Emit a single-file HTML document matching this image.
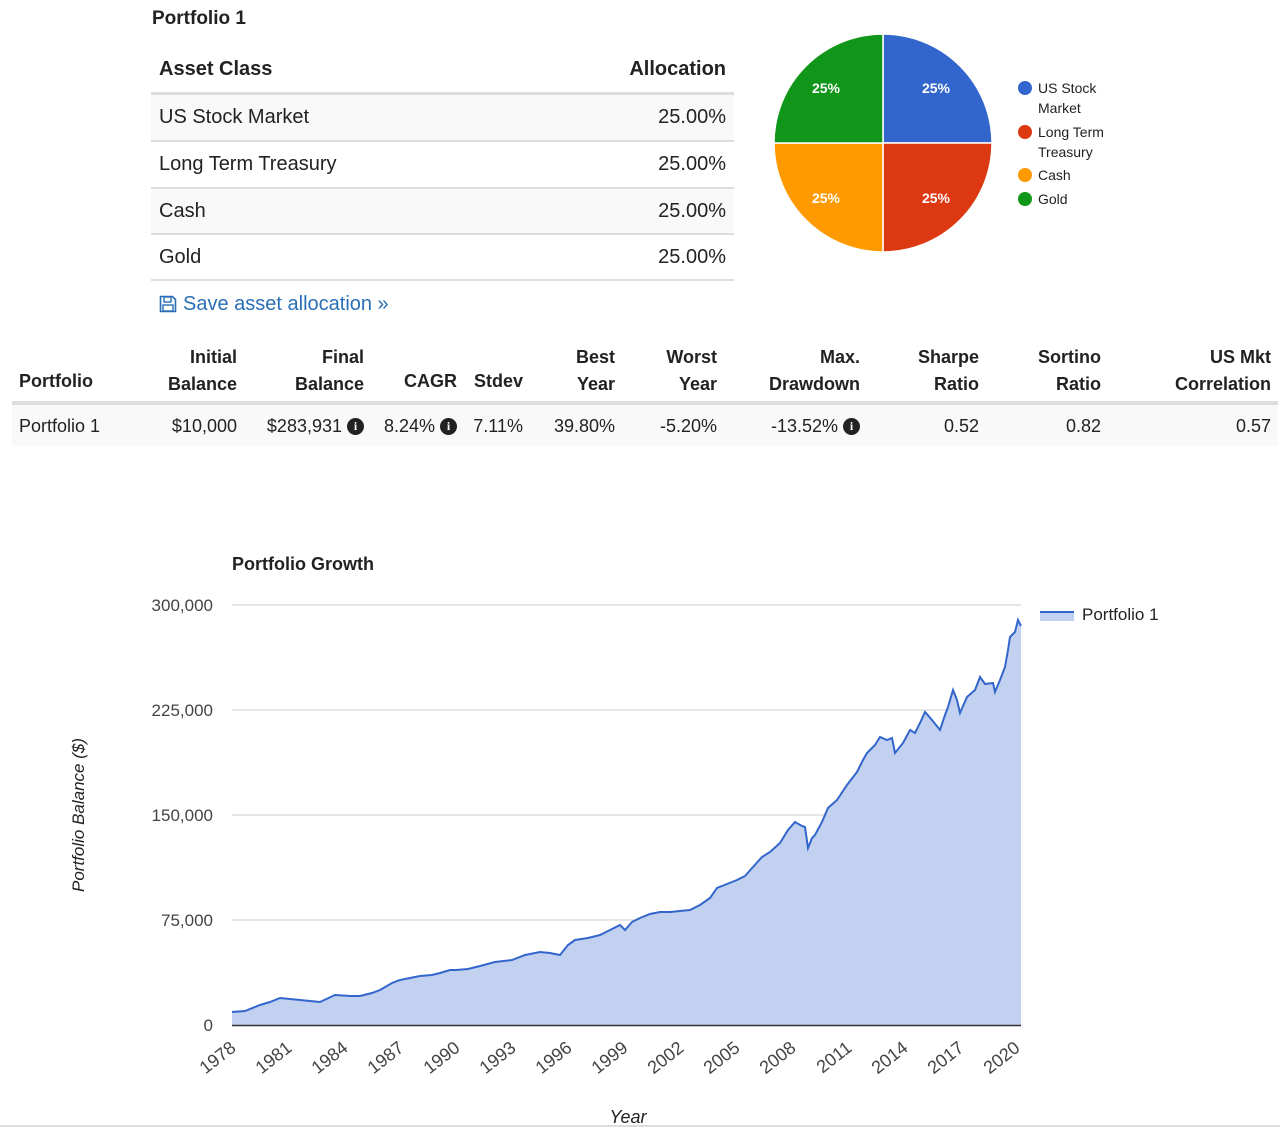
<!DOCTYPE html>
<html><head><meta charset="utf-8"><style>
body{margin:0;width:1280px;height:1133px;background:#fff;font-family:"Liberation Sans",Arial,sans-serif;color:#222;position:relative;overflow:hidden}
.a{position:absolute;white-space:nowrap}
.b{font-weight:bold}
.r{text-align:right}
.i{display:inline-block;width:17px;height:17px;border-radius:50%;background:#222;color:#fff;font-size:12px;font-weight:bold;text-align:center;line-height:17px;vertical-align:2px;font-family:"Liberation Serif",serif}
</style></head><body>
<div class="a b" style="left:152px;top:8px;font-size:19px">Portfolio 1</div>
<div class="a b" style="left:159px;top:58px;font-size:20px">Asset Class</div>
<div class="a b" style="left:560px;width:166px;top:58px;font-size:20px;text-align:right">Allocation</div>
<div class="a" style="left:151px;top:92px;width:583px;height:3px;background:#ddd"></div>
<div class="a" style="left:151px;top:95px;width:583px;height:45px;background:#f9f9f9;border-bottom:2px solid #ddd"></div>
<div class="a" style="left:151px;top:142px;width:583px;height:45px;border-bottom:2px solid #ddd"></div>
<div class="a" style="left:151px;top:189px;width:583px;height:44px;background:#f9f9f9;border-bottom:2px solid #ddd"></div>
<div class="a" style="left:151px;top:235px;width:583px;height:44px;border-bottom:2px solid #ddd"></div>
<div class="a" style="left:159px;top:106px;font-size:20px">US Stock Market</div>
<div class="a" style="left:159px;top:153px;font-size:20px">Long Term Treasury</div>
<div class="a" style="left:159px;top:200px;font-size:20px">Cash</div>
<div class="a" style="left:159px;top:246px;font-size:20px">Gold</div>
<div class="a r" style="left:600px;width:126px;top:106px;font-size:20px">25.00%</div>
<div class="a r" style="left:600px;width:126px;top:153px;font-size:20px">25.00%</div>
<div class="a r" style="left:600px;width:126px;top:200px;font-size:20px">25.00%</div>
<div class="a r" style="left:600px;width:126px;top:246px;font-size:20px">25.00%</div>
<svg class="a" style="left:159px;top:295px" width="18" height="18" viewBox="0 0 18 18"><path d="M1.5 1.5h12l3 3v12h-15z" fill="none" stroke="#2a6fb6" stroke-width="1.6"/><rect x="5" y="2" width="7" height="5" fill="none" stroke="#2a6fb6" stroke-width="1.4"/><rect x="4" y="10" width="10" height="6" fill="none" stroke="#2a6fb6" stroke-width="1.4"/></svg>
<div class="a" style="left:183px;top:293px;font-size:20px;color:#2a6fb6">Save asset allocation »</div>

<svg class="a" style="left:770px;top:30px" width="360" height="230">
<path d="M113 113V4A109 109 0 0 1 222 113Z" fill="#3366cc" stroke="#fff" stroke-width="1.5"/>
<path d="M113 113H222A109 109 0 0 1 113 222Z" fill="#dc3912" stroke="#fff" stroke-width="1.5"/>
<path d="M113 113V222A109 109 0 0 1 4 113Z" fill="#ff9900" stroke="#fff" stroke-width="1.5"/>
<path d="M113 113H4A109 109 0 0 1 113 4Z" fill="#109618" stroke="#fff" stroke-width="1.5"/>
<g fill="#fff" font-size="14" font-weight="bold" text-anchor="middle"><text x="56" y="63">25%</text><text x="166" y="63">25%</text><text x="56" y="173">25%</text><text x="166" y="173">25%</text></g>
<g font-size="14" fill="#222"><circle cx="255" cy="58" r="7" fill="#3366cc"/><text x="268" y="63">US Stock</text><text x="268" y="83">Market</text>
<circle cx="255" cy="102" r="7" fill="#dc3912"/><text x="268" y="107">Long Term</text><text x="268" y="127">Treasury</text>
<circle cx="255" cy="145" r="7" fill="#ff9900"/><text x="268" y="150">Cash</text>
<circle cx="255" cy="169" r="7" fill="#109618"/><text x="268" y="174">Gold</text></g>
</svg>

<div style="font-size:18px">
<div class="a b" style="left:19px;top:371px">Portfolio</div>
<div class="a b r" style="right:1043px;top:344px;line-height:27px">Initial<br>Balance</div>
<div class="a b r" style="right:916px;top:344px;line-height:27px">Final<br>Balance</div>
<div class="a b r" style="right:823px;top:371px">CAGR</div>
<div class="a b r" style="right:757px;top:371px">Stdev</div>
<div class="a b r" style="right:665px;top:344px;line-height:27px">Best<br>Year</div>
<div class="a b r" style="right:563px;top:344px;line-height:27px">Worst<br>Year</div>
<div class="a b r" style="right:420px;top:344px;line-height:27px">Max.<br>Drawdown</div>
<div class="a b r" style="right:301px;top:344px;line-height:27px">Sharpe<br>Ratio</div>
<div class="a b r" style="right:179px;top:344px;line-height:27px">Sortino<br>Ratio</div>
<div class="a b r" style="right:9px;top:344px;line-height:27px">US Mkt<br>Correlation</div>
<div class="a" style="left:12px;top:401px;width:1266px;height:4px;background:#ddd"></div>
<div class="a" style="left:12px;top:405px;width:1266px;height:41px;background:#f9f9f9"></div>
<div class="a" style="left:19px;top:416px">Portfolio 1</div>
<div class="a r" style="right:1043px;top:416px">$10,000</div>
<div class="a r" style="right:916px;top:416px">$283,931 <span class="i">i</span></div>
<div class="a r" style="right:823px;top:416px">8.24% <span class="i">i</span></div>
<div class="a r" style="right:757px;top:416px">7.11%</div>
<div class="a r" style="right:665px;top:416px">39.80%</div>
<div class="a r" style="right:563px;top:416px">-5.20%</div>
<div class="a r" style="right:420px;top:416px">-13.52% <span class="i">i</span></div>
<div class="a r" style="right:301px;top:416px">0.52</div>
<div class="a r" style="right:179px;top:416px">0.82</div>
<div class="a r" style="right:9px;top:416px">0.57</div>
</div>

<svg class="a" style="left:0;top:0" width="1280" height="1133">
<text x="232" y="570" font-size="18" font-weight="bold" fill="#222">Portfolio Growth</text>
<g stroke="#ccc" stroke-width="1"><line x1="232" y1="605" x2="1021" y2="605"/><line x1="232" y1="710" x2="1021" y2="710"/><line x1="232" y1="815" x2="1021" y2="815"/><line x1="232" y1="920" x2="1021" y2="920"/></g>
<g font-size="17" fill="#444" text-anchor="end"><text x="213" y="611">300,000</text><text x="213" y="716">225,000</text><text x="213" y="821">150,000</text><text x="213" y="926">75,000</text><text x="213" y="1031">0</text></g>
<path d="M232 1012L245 1011L260 1005L270 1002L280 998L290 999L300 1000L310 1001L320 1002L335 995L350 996L360 996L372 993L380 990L392 983L400 980L410 978L420 976L432 975L440 973L450 970L456 970L468 969L480 966L495 962L512 960L525 955L540 952L550 953L560 955L568 945L575 940L588 938L600 935L610 930L620 925L625 930L632 922L640 918L650 914L660 912L670 912L680 911L690 910L700 905L710 898L717 888L727 884L737 880L745 876L753 867L762 857L770 852L780 843L788 830L795 822L802 826L805 827L808 848L812 838L815 835L822 822L828 808L837 800L847 785L857 772L863 760L867 753L875 745L880 737L887 740L892 738L895 753L903 743L910 730L915 733L920 723L925 712L932 720L940 730L945 715L948 707L953 690L957 700L960 713L967 697L975 690L980 677L985 684L993 683L995 692L1000 680L1005 667L1008 650L1010 637L1015 632L1018 620L1021 626L1021 1025L232 1025Z" fill="#c2d1ef"/>
<path d="M232 1012L245 1011L260 1005L270 1002L280 998L290 999L300 1000L310 1001L320 1002L335 995L350 996L360 996L372 993L380 990L392 983L400 980L410 978L420 976L432 975L440 973L450 970L456 970L468 969L480 966L495 962L512 960L525 955L540 952L550 953L560 955L568 945L575 940L588 938L600 935L610 930L620 925L625 930L632 922L640 918L650 914L660 912L670 912L680 911L690 910L700 905L710 898L717 888L727 884L737 880L745 876L753 867L762 857L770 852L780 843L788 830L795 822L802 826L805 827L808 848L812 838L815 835L822 822L828 808L837 800L847 785L857 772L863 760L867 753L875 745L880 737L887 740L892 738L895 753L903 743L910 730L915 733L920 723L925 712L932 720L940 730L945 715L948 707L953 690L957 700L960 713L967 697L975 690L980 677L985 684L993 683L995 692L1000 680L1005 667L1008 650L1010 637L1015 632L1018 620L1021 626" fill="none" stroke="#3366cc" stroke-width="2"/>
<line x1="232" y1="1025.5" x2="1021" y2="1025.5" stroke="#333" stroke-width="1.5"/>
<g font-size="18" fill="#444" text-anchor="end">
<text transform="translate(237,1050) rotate(-38)">1978</text><text transform="translate(293,1050) rotate(-38)">1981</text><text transform="translate(349,1050) rotate(-38)">1984</text><text transform="translate(405,1050) rotate(-38)">1987</text><text transform="translate(461,1050) rotate(-38)">1990</text><text transform="translate(517,1050) rotate(-38)">1993</text><text transform="translate(573,1050) rotate(-38)">1996</text><text transform="translate(629,1050) rotate(-38)">1999</text><text transform="translate(685,1050) rotate(-38)">2002</text><text transform="translate(741,1050) rotate(-38)">2005</text><text transform="translate(797,1050) rotate(-38)">2008</text><text transform="translate(853,1050) rotate(-38)">2011</text><text transform="translate(909,1050) rotate(-38)">2014</text><text transform="translate(965,1050) rotate(-38)">2017</text><text transform="translate(1021,1050) rotate(-38)">2020</text>
</g>
<text x="628" y="1123" font-size="18" font-style="italic" fill="#222" text-anchor="middle">Year</text>
<text transform="translate(84,815) rotate(-90)" font-size="17" font-style="italic" fill="#222" text-anchor="middle">Portfolio Balance ($)</text>
<rect x="1040" y="611" width="34" height="10" fill="#c2d1ef"/><line x1="1040" y1="612" x2="1074" y2="612" stroke="#3366cc" stroke-width="2"/>
<text x="1082" y="620" font-size="17" fill="#222">Portfolio 1</text>
<line x1="0" y1="1126" x2="1280" y2="1126" stroke="#ddd" stroke-width="2"/>
</svg>
</body></html>
